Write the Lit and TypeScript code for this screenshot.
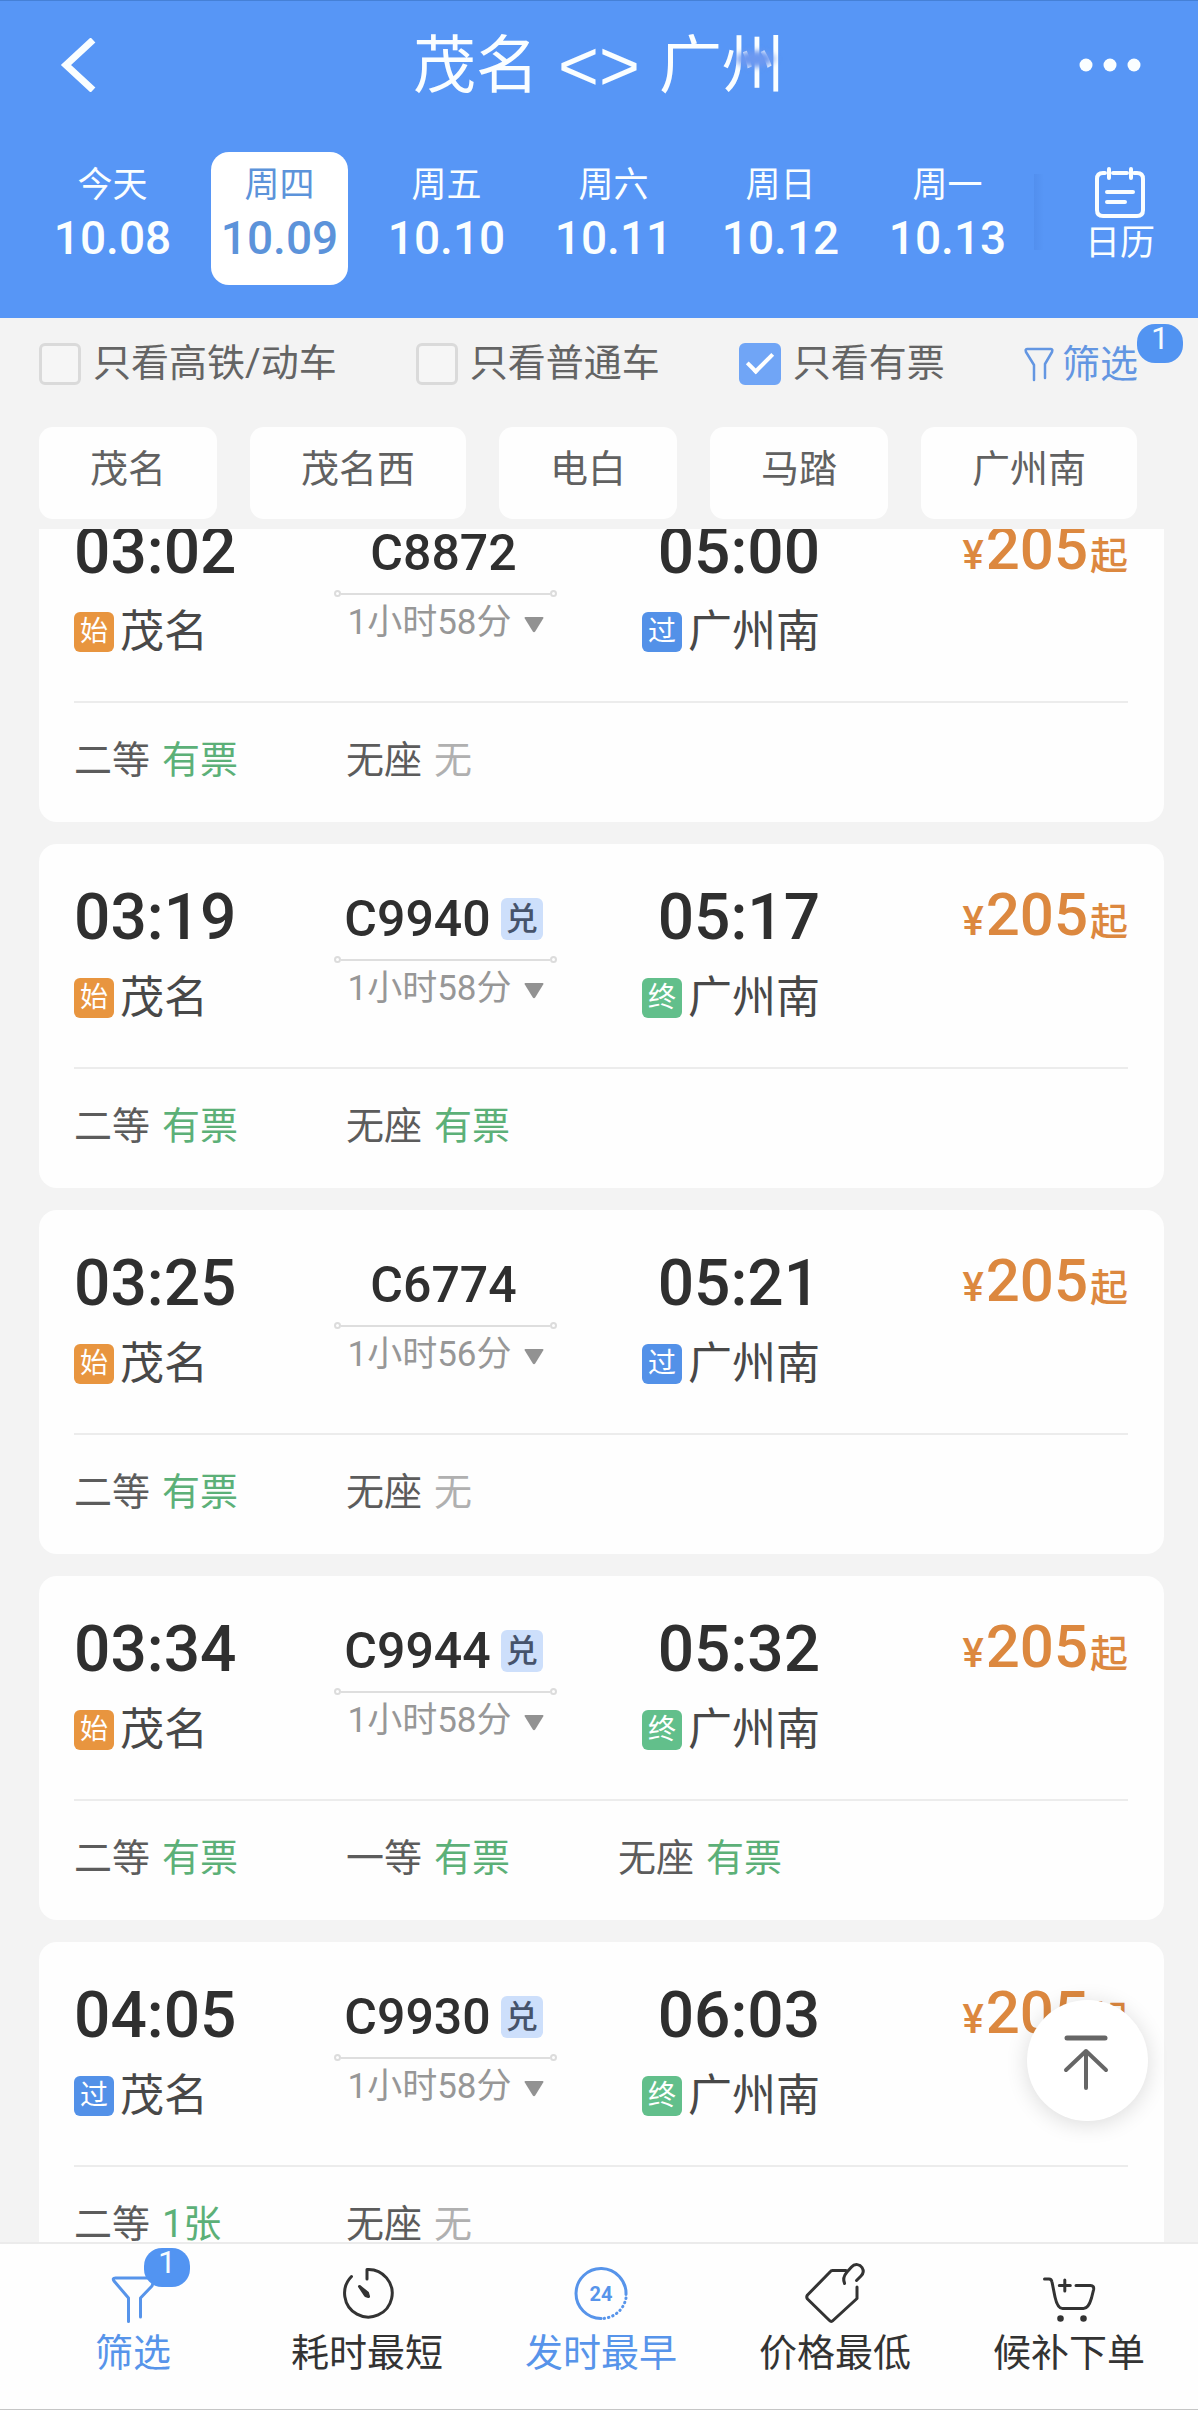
import { LitElement, html, css, svg, nothing } from "lit";
import { customElement, property, state } from "lit/decorators.js";
import { classMap } from "lit/directives/class-map.js";

type StopKind = "始" | "过" | "终";

interface Seat {
  name: string;
  left: string;
}

interface Train {
  no: string;
  redeemable: boolean;
  depart: string;
  arrive: string;
  from: string;
  to: string;
  fromKind: StopKind;
  toKind: StopKind;
  duration: string;
  price: number;
  seats: Seat[];
}

const TRAINS: Train[] = [
  {
    no: "C8872", redeemable: false, depart: "03:02", arrive: "05:00", from: "茂名", to: "广州南",
    fromKind: "始", toKind: "过", duration: "1小时58分", price: 205,
    seats: [{ name: "二等", left: "有票" }, { name: "无座", left: "无" }],
  },
  {
    no: "C9940", redeemable: true, depart: "03:19", arrive: "05:17", from: "茂名", to: "广州南",
    fromKind: "始", toKind: "终", duration: "1小时58分", price: 205,
    seats: [{ name: "二等", left: "有票" }, { name: "无座", left: "有票" }],
  },
  {
    no: "C6774", redeemable: false, depart: "03:25", arrive: "05:21", from: "茂名", to: "广州南",
    fromKind: "始", toKind: "过", duration: "1小时56分", price: 205,
    seats: [{ name: "二等", left: "有票" }, { name: "无座", left: "无" }],
  },
  {
    no: "C9944", redeemable: true, depart: "03:34", arrive: "05:32", from: "茂名", to: "广州南",
    fromKind: "始", toKind: "终", duration: "1小时58分", price: 205,
    seats: [{ name: "二等", left: "有票" }, { name: "一等", left: "有票" }, { name: "无座", left: "有票" }],
  },
  {
    no: "C9930", redeemable: true, depart: "04:05", arrive: "06:03", from: "茂名", to: "广州南",
    fromKind: "过", toKind: "终", duration: "1小时58分", price: 205,
    seats: [{ name: "二等", left: "1张" }, { name: "无座", left: "无" }],
  },
];

const DAYS = [
  ["今天", "10.08"],
  ["周四", "10.09"],
  ["周五", "10.10"],
  ["周六", "10.11"],
  ["周日", "10.12"],
  ["周一", "10.13"],
];

const STATIONS = ["茂名", "茂名西", "电白", "马踏", "广州南"];

const base = css`
  *,
  *::before,
  *::after {
    box-sizing: border-box;
  }
  button {
    margin: 0;
    padding: 0;
    border: 0;
    background: none;
    font: inherit;
    color: inherit;
    cursor: pointer;
  }
  a {
    color: inherit;
    text-decoration: none;
  }
  svg {
    display: block;
    flex: none;
    fill: none;
    stroke: currentColor;
    stroke-linecap: round;
    stroke-linejoin: round;
  }
`;

@customElement("train-card")
export class TrainCard extends LitElement {
  @property({ attribute: false }) train!: Train;

  static styles = [
    base,
    css`
      :host {
        display: block;
      }
      .card {
        padding: 38px 36px 34px 35px;
        border-radius: 18px;
        background: #fefefe;
      }
      .trip {
        display: grid;
        grid-template-columns: 260fr 223fr 263fr 308fr;
        align-items: start;
        padding-bottom: 41px;
        border-bottom: 2px solid #ececec;
      }
      .stop {
        display: flex;
        flex-direction: column;
        align-items: flex-start;
        gap: 16px;
      }
      .arrive {
        align-items: flex-end;
      }
      .time {
        font-size: 64px;
        line-height: 72px;
        font-weight: 500;
        color: #2f2f2f;
      }
      .station {
        display: flex;
        align-items: center;
        gap: 6px;
        font-size: 44px;
        line-height: 56px;
        color: #484848;
        white-space: nowrap;
      }
      .kind {
        width: 40px;
        height: 40px;
        border-radius: 6px;
        font-size: 28px;
        line-height: 40px;
        text-align: center;
        color: #fff;
      }
      .start {
        background: #e8953f;
      }
      .pass {
        background: #5391e8;
      }
      .end {
        background: #62bf8b;
      }
      .middle {
        display: flex;
        flex-direction: column;
        align-items: center;
      }
      .number {
        display: flex;
        align-items: center;
        gap: 10px;
        padding-right: 4px;
        font-size: 50px;
        line-height: 74px;
        font-weight: 500;
        color: #2f2f2f;
      }
      .redeem {
        width: 42px;
        height: 42px;
        border-radius: 6px;
        background: #cddffb;
        font-size: 32px;
        line-height: 42px;
        font-weight: 500;
        text-align: center;
        color: #46536b;
      }
      .track {
        display: flex;
        align-items: center;
        width: 100%;
      }
      .track::before,
      .track::after {
        content: "";
        width: 7px;
        height: 7px;
        border: 2px solid #dcdcdc;
        border-radius: 50%;
      }
      .rail {
        flex: 1;
        height: 2px;
        background: #dedede;
      }
      .duration {
        display: flex;
        align-items: center;
        gap: 12px;
        margin-top: 2px;
        font-size: 35px;
        line-height: 48px;
        color: #979797;
        white-space: nowrap;
      }
      .duration svg {
        fill: #929292;
        stroke: none;
      }
      .price {
        display: flex;
        align-items: baseline;
        justify-content: flex-end;
        gap: 2px;
        font-size: 38px;
        line-height: 66px;
        font-weight: 500;
        color: #dc883f;
      }
      .yen {
        font-size: 40px;
      }
      .amount {
        font-size: 60px;
      }
      .seats {
        display: grid;
        grid-template-columns: repeat(auto-fill, 272px);
        margin: 0;
        padding: 29px 0 0;
        list-style: none;
        font-size: 38px;
        line-height: 56px;
      }
      .seat {
        display: flex;
        gap: 12px;
        color: #5c5c5c;
      }
      .left {
        color: #5cb078;
      }
      .none {
        color: #b0b0b0;
      }
    `,
  ];

  private kind(k: StopKind) {
    return html`<span class=${classMap({ kind: true, start: k === "始", pass: k === "过", end: k === "终" })}>${k}</span>`;
  }

  render() {
    const t = this.train;
    return html`
      <article class="card">
        <div class="trip">
          <div class="stop">
            <time class="time">${t.depart}</time>
            <span class="station">${this.kind(t.fromKind)}<span>${t.from}</span></span>
          </div>
          <div class="middle">
            <span class="number"><span>${t.no}</span>${t.redeemable ? html`<span class="redeem">兑</span>` : nothing}</span>
            <span class="track"><span class="rail"></span></span>
            <button class="duration" type="button">
              <span>${t.duration}</span>
              <svg width="20" height="24" viewBox="0 0 20 24"><path d="M1.500 6h17q1.500 0 .7 1.400l-8 13q-1.200 1.600-2.400 0l-8-13Q0 6 1.500 6z" /></svg>
            </button>
          </div>
          <div class="stop arrive">
            <time class="time">${t.arrive}</time>
            <span class="station">${this.kind(t.toKind)}<span>${t.to}</span></span>
          </div>
          <div class="price"><span class="yen">¥</span><span class="amount">${t.price}</span><span>起</span></div>
        </div>
        <ul class="seats">
          ${t.seats.map(
            (s) => html`<li class="seat"><span>${s.name}</span><span class=${s.left === "无" ? "none" : "left"}>${s.left}</span></li>`
          )}
        </ul>
      </article>
    `;
  }
}

const NAV = [
  {
    label: "筛选", active: true, badge: "1",
    icon: svg`<g transform="translate(10 12)"><path d="M44 4H4.500Q1 4 3 7L17.500 24V47.500M44 4L41 12 29.500 24V43" /></g>`,
  },
  {
    label: "耗时最短", active: false, badge: "",
    icon: svg`<path d="M32 17V7.500A23.800 23.800 0 1 1 16.500 14.500" /><path d="M24.500 24.500l8 6.500 1 3.500-3-1z" fill="currentColor" />`,
  },
  {
    label: "发时最早", active: true, badge: "",
    icon: svg`<path d="M57 32.500A25 25 0 1 0 32 56.500" /><path d="M57 36A25 25 0 0 1 34 56.500" stroke-dasharray="0.500 4" />
      <text class="hours" x="32" y="38.500" text-anchor="middle">24</text>`,
  },
  {
    label: "价格最低", active: false, badge: "",
    icon: svg`<g transform="translate(0 -2)"><path d="M43 10.500H29.500Q28 10.500 27 12L4.500 35q-1.500 2 0 4l22 21.500q1.800 1.800 3.500 0L54 38.500V27" />
      <path d="M41.600 23.500C39.500 19 41 15.500 44 12L48.500 7C52 3 57 4.500 59 7.500c2.200 3.500 1 6.500-1 8.500L53.500 20.500" /></g>`,
  },
  {
    label: "候补下单", active: false, badge: "",
    icon: svg`<g transform="translate(5.500 12)"><path d="M2 5H6.500Q9 5 9.500 8L12.500 23Q15 34.500 20 34.500H41Q46 34.500 49 24L51 16Q52 11.500 48 11.500H33.500" />
      <path d="M22.300 6v11M16.800 11.500h11" /><g fill="currentColor"><circle cx="18" cy="44.500" r="1.800" /><circle cx="41" cy="44.500" r="1.800" /></g></g>`,
  },
];

@customElement("app-root")
export class AppRoot extends LitElement {
  @state() private day = 1;

  static styles = [
    base,
    css`
      :host {
        display: flex;
        flex-direction: column;
        height: 100vh;
        overflow: hidden;
        background: #f3f3f3;
        font-family: Roboto, "Noto Sans CJK SC", sans-serif;
      }
      .top {
        padding-bottom: 33px;
        border-top: 1px solid #4580d6;
        background: #5796f6;
        color: #fafeff;
      }
      .bar {
        display: grid;
        grid-template-columns: 160px 1fr 160px;
        align-items: center;
        height: 127px;
      }
      .back {
        justify-self: start;
        padding: 20px 20px 20px 58px;
      }
      .back svg {
        stroke-linecap: butt;
        stroke-linejoin: miter;
      }
      .more {
        justify-self: end;
        padding: 20px 56px 20px 20px;
      }
      .more svg {
        fill: currentColor;
        stroke: none;
      }
      .title {
        display: flex;
        align-items: center;
        justify-content: center;
        gap: 19px;
        margin: 0;
        padding-top: 3px;
        font-size: 63px;
        line-height: 80px;
        font-weight: 400;
        white-space: nowrap;
      }
      .swap {
        font-family: "Liberation Sans", sans-serif;
        font-size: 70px;
      }
      .dest {
        position: relative;
      }
      .dest::after {
        content: "";
        position: absolute;
        right: 6px;
        top: 22px;
        width: 48px;
        height: 22px;
        background: radial-gradient(closest-side, #6c98f0 50%, #6c98f000);
        filter: blur(2px);
      }
      .dates {
        display: flex;
        margin-top: 24px;
      }
      .days {
        flex: 1;
        display: grid;
        grid-template-columns: repeat(6, 1fr);
        gap: 30px;
        padding: 0 18px 0 44px;
      }
      .day {
        display: flex;
        flex-direction: column;
        align-items: center;
        padding: 12px 0 16px;
        border-radius: 18px;
        font-size: 35px;
        line-height: 44px;
      }
      .date {
        font-size: 46px;
        line-height: 61px;
        font-weight: 500;
      }
      .chosen {
        background: #fff;
        color: #5c93da;
      }
      .calendar {
        display: flex;
        flex-direction: column;
        align-items: center;
        width: 164px;
        padding: 14px 0 0 8px;
        background: linear-gradient(90deg, #528fee, #5796f600) 0 22px / 10px 76px no-repeat;
        font-size: 35px;
        line-height: 44px;
      }
      .filters {
        display: flex;
        align-items: center;
        justify-content: space-between;
        height: 92px;
        padding: 0 60px 0 39px;
        font-size: 38px;
        line-height: 44px;
        color: #646464;
        white-space: nowrap;
      }
      .option {
        display: flex;
        align-items: center;
        gap: 12px;
      }
      .option span {
        padding-bottom: 3px;
      }
      .tick {
        display: grid;
        place-items: center;
        appearance: none;
        width: 42px;
        height: 42px;
        margin: 0;
        border: 3px solid #dadada;
        border-radius: 6px;
        background: #f6f6f6;
      }
      .tick:checked {
        border-color: #70a5f6;
        background: #70a5f6;
      }
      .tick:checked::before {
        content: "";
        width: 14px;
        height: 26px;
        margin-top: -8px;
        border: solid #fff;
        border-width: 0 4px 4px 0;
        transform: rotate(45deg);
      }
      .filter {
        position: relative;
        display: flex;
        align-items: center;
        gap: 8px;
        color: #6396e2;
      }
      .badge {
        position: absolute;
        width: 46px;
        height: 39px;
        border-radius: 18px;
        background: #5294f2;
        font-size: 32px;
        line-height: 29px;
        text-align: center;
        color: #f4fbff;
      }
      .filter .badge {
        top: -18px;
        right: -45px;
      }
      .chips {
        display: flex;
        gap: 33px;
        padding: 17px 39px 10px;
      }
      .chip {
        padding: 18px 51px 26px;
        border-radius: 14px;
        background: #fefefe;
        font-size: 38px;
        line-height: 48px;
        color: #616161;
        white-space: nowrap;
      }
      .results {
        position: relative;
        flex: 1;
        min-height: 0;
        overflow: hidden;
      }
      .list {
        display: flex;
        flex-direction: column;
        gap: 22px;
        margin-top: -51px;
        padding: 0 34px 0 39px;
      }
      .totop {
        position: absolute;
        right: 50px;
        bottom: 121px;
        display: grid;
        place-items: center;
        width: 121px;
        height: 121px;
        border-radius: 50%;
        background: #fff;
        box-shadow: 0 3px 22px #00000024;
        color: #666;
      }
      .nav {
        display: grid;
        grid-template-columns: repeat(5, 1fr);
        padding: 18px 12px 32px 16px;
        border-top: 2px solid #ebebeb;
        border-bottom: 1px solid #c6c6c6;
        background: #fefefe;
      }
      .tab {
        display: flex;
        flex-direction: column;
        align-items: center;
        gap: 3px;
        font-size: 38px;
        line-height: 48px;
        color: #333;
        white-space: nowrap;
      }
      .active {
        color: #5794ea;
      }
      .icon {
        position: relative;
      }
      .icon .badge {
        top: -14px;
        left: 43px;
      }
      .hours {
        fill: currentColor;
        stroke: none;
        font-size: 20px;
        font-weight: 700;
      }
    `,
  ];

  render() {
    return html`
      <header class="top">
        <div class="bar">
          <button class="back" type="button" aria-label="返回">
            <svg width="40" height="54" viewBox="0 0 40 54" stroke-width="7"><path d="M35 2L8 27l27 25" /></svg>
          </button>
          <h1 class="title"><span>茂名</span> <span class="swap">&lt;&gt;</span> <span class="dest">广州</span></h1>
          <button class="more" type="button" aria-label="更多">
            <svg width="64" height="16" viewBox="0 0 64 16"><circle cx="8" cy="8" r="6.500" /><circle cx="32" cy="8" r="6.500" /><circle cx="56" cy="8" r="6.500" /></svg>
          </button>
        </div>
        <div class="dates">
          <div class="days">
            ${DAYS.map(
              ([label, date], i) => html`
                <button type="button" class=${classMap({ day: true, chosen: i === this.day })} @click=${() => (this.day = i)}>
                  <span>${label}</span><span class="date">${date}</span>
                </button>
              `
            )}
          </div>
          <button class="calendar" type="button">
            <svg width="54" height="56" viewBox="0 0 54 56" stroke-width="4">
              <path d="M12 7H10Q4 7 4 13V44Q4 50 10 50H44Q50 50 50 44V13Q50 7 44 7H41M20 7H34M16 3v9M38 3v9M14 26H40M14 36H32" />
            </svg>
            <span>日历</span>
          </button>
        </div>
      </header>

      <div class="filters">
        <label class="option"><input class="tick" type="checkbox" /><span>只看高铁/动车</span></label>
        <label class="option"><input class="tick" type="checkbox" /><span>只看普通车</span></label>
        <label class="option"><input class="tick" type="checkbox" checked /><span>只看有票</span></label>
        <button class="filter" type="button">
          <svg width="30" height="36" viewBox="0 0 30 36" stroke-width="2.500"><path d="M10 34V19L2 6Q1 3 3 3H27Q29 3 28 6L21 18V32" /></svg>
          <span>筛选</span><span class="badge">1</span>
        </button>
      </div>

      <div class="chips">${STATIONS.map((s) => html`<button class="chip" type="button">${s}</button>`)}</div>

      <main class="results">
        <div class="list">${TRAINS.map((t) => html`<train-card .train=${t}></train-card>`)}</div>
        <button class="totop" type="button" aria-label="回到顶部">
          <svg width="52" height="58" viewBox="0 0 52 58" stroke-width="4"><path d="M5 6H43" stroke-width="5" /><path d="M24 56V19M4 38L24 19 44 38" /></svg>
        </button>
      </main>

      <nav class="nav">
        ${NAV.map(
          (n) => html`
            <a class=${classMap({ tab: true, active: n.active })} href="#">
              <span class="icon">
                <svg width="64" height="64" viewBox="0 0 64 64" stroke-width="3">${n.icon}</svg>
                ${n.badge ? html`<span class="badge">${n.badge}</span>` : nothing}
              </span>
              <span>${n.label}</span>
            </a>
          `
        )}
      </nav>
    `;
  }
}
